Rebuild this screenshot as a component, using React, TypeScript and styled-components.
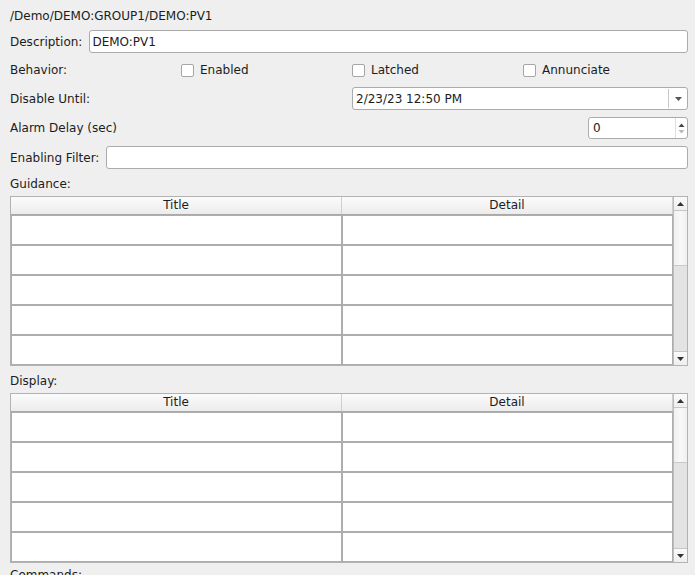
import React from "react";
import styled, { createGlobalStyle } from "styled-components";

const Global = createGlobalStyle`
  html, body { margin: 0; padding: 0; background: #efefef; }
  body {
    font-family: "DejaVu Sans", "Liberation Sans", sans-serif;
    font-size: 12px;
    color: #1c1c1c;
    overflow: hidden;
  }
`;

const Page = styled.div`
  width: 695px;
  height: 575px;
  overflow: hidden;
  box-sizing: border-box;
  padding: 9px 7px 0 10px;
  display: flex;
  flex-direction: column;
  gap: 7px;
  & > * {
    flex-shrink: 0;
  }
`;

const PathLine = styled.div`
  height: 14px;
  line-height: 14px;
  white-space: nowrap;
`;

const FieldRow = styled.div`
  display: flex;
  align-items: center;
  gap: 7px;
  height: 23px;
`;

const Label = styled.span`
  white-space: nowrap;
  line-height: 14px;
`;

const TextInput = styled.div`
  flex: 1;
  height: 23px;
  box-sizing: border-box;
  background: #fff;
  border: 1px solid #ababab;
  border-radius: 3px;
  padding: 0 2px;
  display: flex;
  align-items: center;
  line-height: 14px;
`;

const GridRow = styled.div<{ $h: number }>`
  display: grid;
  grid-template-columns: 171px 171px 171px 1fr;
  align-items: center;
  height: ${(p) => p.$h}px;
`;

const CheckItem = styled.label`
  display: flex;
  align-items: center;
  gap: 6px;
`;

const CheckBox = styled.span`
  width: 13px;
  height: 13px;
  box-sizing: border-box;
  background: #fff;
  border: 1px solid #a6a6a6;
  border-radius: 2px;
  display: inline-block;
`;

const Combo = styled.div`
  grid-column: 3 / 5;
  height: 23px;
  box-sizing: border-box;
  background: #fff;
  border: 1px solid #ababab;
  border-radius: 3px;
  display: flex;
  align-items: stretch;
`;

const ComboText = styled.div`
  flex: 1;
  padding-left: 3px;
  display: flex;
  align-items: center;
`;

const ComboButton = styled.div`
  width: 18px;
  border-left: 1px solid #c8c8c8;
  margin: 1px 0;
  display: flex;
  align-items: center;
  justify-content: center;
`;

const Spin = styled.div`
  grid-column: 4;
  justify-self: end;
  width: 100px;
  height: 22px;
  box-sizing: border-box;
  background: #fff;
  border: 1px solid #ababab;
  border-radius: 3px;
  display: flex;
  align-items: stretch;
`;

const SpinText = styled.div`
  flex: 1;
  padding-left: 4px;
  display: flex;
  align-items: center;
`;

const SpinButtons = styled.div`
  width: 11px;
  border-left: 1px solid #dedede;
  display: flex;
  flex-direction: column;
  align-items: center;
  justify-content: center;
  gap: 3px;
`;

const SectionLabel = styled.div<{ $shift?: number }>`
  height: 14px;
  line-height: 14px;
  margin-top: ${(p) => 1 + (p.$shift ?? 0)}px;
  margin-bottom: -2px;
  white-space: nowrap;
`;

const TableFrame = styled.div`
  display: flex;
  border: 1px solid #b2b2b2;
  background: #fff;
  height: 170px;
  box-sizing: border-box;
`;

const TableBody = styled.div`
  width: 662px;
  display: flex;
  flex-direction: column;
`;

const HeaderRow = styled.div`
  display: grid;
  grid-template-columns: 331px 331px;
  height: 18px;
  flex-shrink: 0;
  box-sizing: border-box;
  border-bottom: 1px solid #a9a9a9;
`;

const HeaderCell = styled.div`
  background: linear-gradient(#fbfbfb, #ececec);
  border-right: 1px solid #cfcfcf;
  text-align: center;
  line-height: 17px;
  color: #1c1c1c;
`;

const CellRow = styled.div`
  display: grid;
  grid-template-columns: 331px 331px;
  height: 30px;
  flex-shrink: 0;
`;

const Cell = styled.div`
  box-sizing: border-box;
  border: 1px solid #adadad;
  background: #fff;
`;

const ScrollBar = styled.div`
  flex: 1;
  display: flex;
  flex-direction: column;
  border-left: 1px solid #bdbdbd;
  background: #e3e3e3;
`;

const ScrollButton = styled.div<{ $bottom?: boolean }>`
  height: 14px;
  flex-shrink: 0;
  box-sizing: border-box;
  background: linear-gradient(#fafafa, #efefef);
  ${(p) =>
    p.$bottom ? "border-top: 1px solid #c6c6c6;" : "border-bottom: 1px solid #c6c6c6;"}
  display: flex;
  align-items: center;
  justify-content: center;
`;

const ScrollHandle = styled.div`
  height: 55px;
  flex-shrink: 0;
  box-sizing: border-box;
  background: linear-gradient(90deg, #f0f0f0, #f8f8f8 50%, #f0f0f0);
  border-bottom: 1px solid #c9c9c9;
`;

const ScrollTrack = styled.div`
  flex: 1;
`;

const Arrow = ({ up, color = "#333" }: { up?: boolean; color?: string }) => (
  <svg width="7" height="4" viewBox="0 0 7 4">
    <polygon points={up ? "0,4 7,4 3.5,0" : "0,0 7,0 3.5,4"} fill={color} />
  </svg>
);

const SmallArrow = ({ up, color }: { up?: boolean; color: string }) => (
  <svg width="7" height="4" viewBox="0 0 7 4">
    <polygon points={up ? "0.5,4 6.5,4 3.5,0.5" : "0.5,0 6.5,0 3.5,3.5"} fill={color} />
  </svg>
);

const DataTable = () => (
  <TableFrame>
    <TableBody>
      <HeaderRow>
        <HeaderCell>Title</HeaderCell>
        <HeaderCell>Detail</HeaderCell>
      </HeaderRow>
      {[0, 1, 2, 3, 4].map((i) => (
        <CellRow key={i}>
          <Cell />
          <Cell />
        </CellRow>
      ))}
    </TableBody>
    <ScrollBar>
      <ScrollButton>
        <Arrow up />
      </ScrollButton>
      <ScrollHandle />
      <ScrollTrack />
      <ScrollButton $bottom>
        <Arrow />
      </ScrollButton>
    </ScrollBar>
  </TableFrame>
);

export default function App() {
  return (
    <>
      <Global />
      <Page>
        <PathLine>/Demo/DEMO:GROUP1/DEMO:PV1</PathLine>
        <FieldRow>
          <Label>Description:</Label>
          <TextInput>DEMO:PV1</TextInput>
        </FieldRow>
        <GridRow $h={20}>
          <Label>Behavior:</Label>
          <CheckItem>
            <CheckBox />
            <span>Enabled</span>
          </CheckItem>
          <CheckItem>
            <CheckBox />
            <span>Latched</span>
          </CheckItem>
          <CheckItem>
            <CheckBox />
            <span>Annunciate</span>
          </CheckItem>
        </GridRow>
        <GridRow $h={23}>
          <Label>Disable Until:</Label>
          <Combo>
            <ComboText>2/23/23 12:50 PM</ComboText>
            <ComboButton>
              <Arrow color="#555" />
            </ComboButton>
          </Combo>
        </GridRow>
        <GridRow $h={22}>
          <Label>Alarm Delay (sec)</Label>
          <Spin>
            <SpinText>0</SpinText>
            <SpinButtons>
              <SmallArrow up color="#444" />
              <SmallArrow color="#b9b9b9" />
            </SpinButtons>
          </Spin>
        </GridRow>
        <FieldRow>
          <Label>Enabling Filter:</Label>
          <TextInput />
        </FieldRow>
        <SectionLabel>Guidance:</SectionLabel>
        <DataTable />
        <SectionLabel>Display:</SectionLabel>
        <DataTable />
        <SectionLabel $shift={-3}>Commands:</SectionLabel>
      </Page>
    </>
  );
}
